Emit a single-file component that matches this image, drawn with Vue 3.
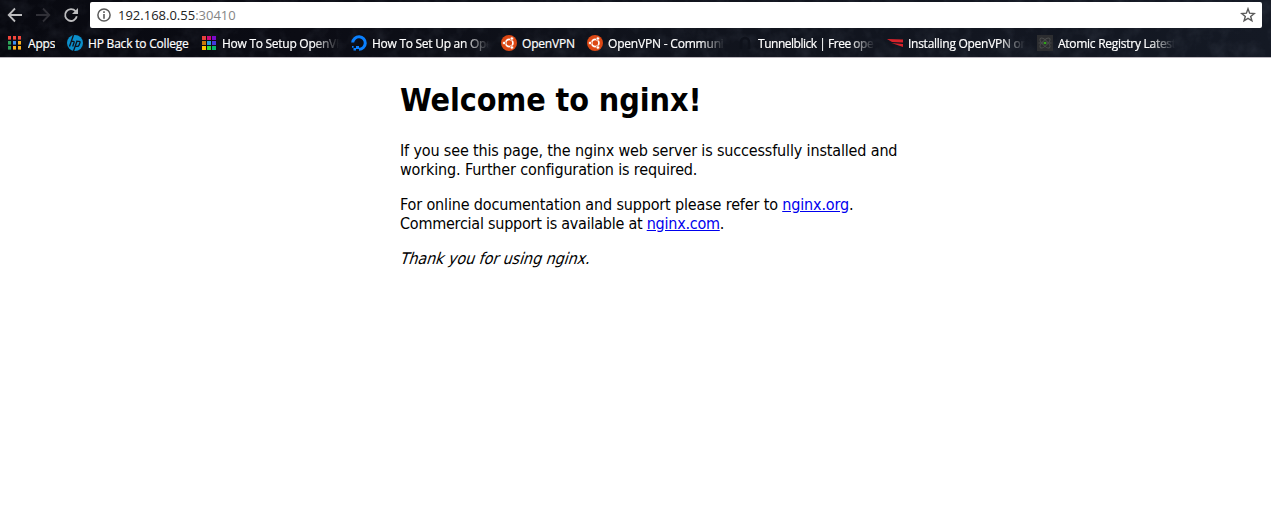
<script setup>
const bookmarks = [
  { icon: 'apps', title: 'Apps', cls: 'b-apps' },
  { icon: 'hp', title: 'HP Back to College', cls: 'b-hp' },
  { icon: 'grid', title: 'How To Setup OpenVP', cls: 'b-full snug' },
  { icon: 'ocean', title: 'How To Set Up an Ope', cls: 'b-full snug' },
  { icon: 'ubuntu', title: 'OpenVPN', cls: 'b-vpn' },
  { icon: 'ubuntu', title: 'OpenVPN - Communi', cls: 'b-full' },
  { icon: 'tunnel', title: 'Tunnelblick | Free ope', cls: 'b-full tight' },
  { icon: 'stripes', title: 'Installing OpenVPN on', cls: 'b-full snug' },
  { icon: 'atomic', title: 'Atomic Registry Latest', cls: 'b-full snug' },
]
const appColors = ['#f2463c', '#f2463c', '#f2463c', '#2da65a', '#3d8ff0', '#fab11e', '#2da65a', '#fab11e', '#fab11e']
const gridColors = ['#e5433c', '#cf0a78', '#7a0acb', '#c97a0a', '#2a9bd8', '#4438e0', '#ffc400', '#35dc38', '#08b86c']
</script>

<template>
  <div class="window">
    <header class="chrome">
      <svg class="texture" width="1271" height="57" aria-hidden="true">
        <filter id="grain" x="0" y="0" width="100%" height="100%">
          <feTurbulence type="fractalNoise" baseFrequency="0.07" numOctaves="4" seed="8" />
          <feColorMatrix values="0 0 0 0 0.25  0 0 0 0 0.29  0 0 0 0 0.37  1.6 0 0 0 -0.65" />
        </filter>
        <rect width="1271" height="57" filter="url(#grain)" />
      </svg>
      <div class="toolbar">
        <svg class="nav" width="90" height="30" viewBox="0 0 90 30" fill="none" stroke-width="1.8">
          <path d="M22 15H9M15 8.500L8.700 15L15 21.500" stroke="#bdbdbf" />
          <path d="M36 15H49M43 8.500L49.300 15L43 21.500" stroke="#303037" />
          <path d="M75.600 11.300A5.900 5.900 0 1 0 76.800 16.300" stroke="#bdbdbf" />
          <path d="M78 8V14H72Z" fill="#bdbdbf" />
        </svg>
        <div class="address">
          <svg class="info" width="14" height="14" viewBox="0 0 14 14">
            <circle cx="7" cy="7" r="6.100" fill="none" stroke="#5a5a5a" stroke-width="1.500" />
            <path d="M6.200 3.300h1.600v1.600H6.200zM6.200 6h1.600v4.700H6.200z" fill="#5a5a5a" />
          </svg>
          <span class="url">192.168.0.55<span class="port">:30410</span></span>
          <svg class="star" width="16" height="16" viewBox="0 0 16 16">
            <path d="M8 1.800L9.600 6.200L14.200 6.500L10.700 9.400L11.900 13.800L8 11.300L4.100 13.800L5.300 9.400L1.800 6.500L6.400 6.200Z" fill="none" stroke="#5a5a5a" stroke-width="1.400" />
          </svg>
        </div>
      </div>
      <nav class="bookmarks">
        <div v-for="(b, i) in bookmarks" :key="i" class="bookmark" :class="b.cls">
          <svg width="16" height="16" viewBox="0 0 16 16">
            <template v-if="b.icon === 'apps'">
              <rect v-for="(c, n) in appColors" :key="n" :x="1 + (n % 3) * 5" :y="1 + Math.floor(n / 3) * 5" width="3" height="3.600" :fill="c" />
            </template>
            <template v-else-if="b.icon === 'grid'">
              <rect v-for="(c, n) in gridColors" :key="n" :x="1 + (n % 3) * 5" :y="1 + Math.floor(n / 3) * 5" width="4" height="4" :fill="c" />
            </template>
            <template v-else-if="b.icon === 'hp'">
              <circle cx="8" cy="8" r="8" fill="#0b8fcb" />
              <path d="M6.500 0L2.500 11.500M3.700 6.300H6.200Q7.500 6.300 7 7.700L5.700 11.500M10.200 5.500L6.500 16M9.800 6.300H12Q13.400 6.300 12.900 7.700L12 10.200Q11.600 11.300 10.300 11.300H8.500" fill="none" stroke="#10131c" stroke-width="1.300" />
            </template>
            <template v-else-if="b.icon === 'ocean'">
              <path d="M1.700 7.500A6.300 6.300 0 1 1 8 14.300" fill="none" stroke="#0a80ff" stroke-width="3" />
              <path d="M5 11h3v3H5zM2.500 13h2.500v2.500H2.500zM1 11h1.600v1.800H1z" fill="#0a80ff" />
            </template>
            <template v-else-if="b.icon === 'ubuntu'">
              <circle cx="8" cy="8" r="8" fill="#dd4814" />
              <circle cx="8.300" cy="8" r="3.600" fill="none" stroke="#fff" stroke-width="1.700" />
              <g fill="#fff" stroke="#dd4814" stroke-width=".7">
                <circle cx="3.100" cy="8" r="1.700" />
                <circle cx="10.900" cy="3.500" r="1.700" />
                <circle cx="10.900" cy="12.500" r="1.700" />
              </g>
            </template>
            <template v-else-if="b.icon === 'tunnel'">
              <path d="M4 14V7a4 4 0 0 1 8 0v7" fill="none" stroke="#0e111a" stroke-width="2.500" />
            </template>
            <template v-else-if="b.icon === 'stripes'">
              <path d="M0 4L16 4.500V7.500L5 7Z" fill="#d9232b" />
              <path d="M4.500 8L16 9V12Z" fill="#d9232b" />
            </template>
            <template v-else>
              <rect width="16" height="16" fill="#2c2d30" />
              <g fill="none" stroke="#4b4d4d" stroke-width="1">
                <ellipse cx="8" cy="8" rx="6.500" ry="2.500" transform="rotate(45 8 8)" />
                <ellipse cx="8" cy="8" rx="6.500" ry="2.500" transform="rotate(-45 8 8)" />
                <path d="M1.500 8h13" />
              </g>
              <circle cx="8" cy="8" r="1.300" fill="#31a719" />
            </template>
          </svg>
          <span class="label">{{ b.title }}</span>
        </div>
      </nav>
    </header>
    <main class="page">
      <h1>Welcome to nginx!</h1>
      <p>
        If you see this page, the nginx web server is successfully installed and<br />
        working. Further configuration is required.
      </p>
      <p>
        For online documentation and support please refer to <a href="#">nginx.org</a>.<br />
        <span class="commercial">Commercial support is available at <a href="#">nginx.com</a>.</span>
      </p>
      <p><em>Thank you for using nginx.</em></p>
    </main>
  </div>
</template>

<style>
body { background: #fff; }
</style>
<style scoped>
.window { width: 1271px; height: 508px; overflow: hidden; background: #fff; }
.chrome {
  position: relative;
  box-sizing: border-box;
  height: 58px;
  border-bottom: 1px solid #b9b4bb;
  background: linear-gradient(90deg, #080910 0, #0b0c14 300px, #10131c 650px, #141924 1271px);
  font-family: "Open Sans", "Noto Sans", sans-serif;
}
.texture { position: absolute; inset: 0; opacity: .14; }
.toolbar { position: relative; display: flex; align-items: flex-start; height: 30px; }
.nav { flex: none; }
.address {
  display: flex;
  align-items: center;
  box-sizing: border-box;
  width: 1172px;
  height: 26px;
  margin-top: 2px;
  padding: 0 6px 0 7px;
  background: #fff;
  border-radius: 2px;
}
.url { margin-left: 7px; font-size: 13px; line-height: 26px; color: #222; white-space: nowrap; }
.port { color: #858585; }
.star { margin-left: auto; }
.bookmarks { position: relative; display: flex; gap: 12px; height: 26px; padding-left: 7px; align-items: center; }
.bookmark { display: flex; align-items: center; gap: 5px; flex: none; box-sizing: border-box; }
.bookmark svg { flex: none; }
.label { flex: 1; min-width: 0; overflow: hidden; white-space: nowrap; font-size: 12px; line-height: 18px; padding-top: 1px; color: #fff; letter-spacing: -.2px; -webkit-text-stroke: .2px #fff; }
.b-apps { width: 48px; }
.b-hp { width: 122px; }
.b-vpn { width: 74px; }
.b-full { width: 138px; }
.b-full .label { mask-image: linear-gradient(90deg, #000 92px, transparent 117px); }
.snug .label { letter-spacing: -.27px; }
.tight .label { letter-spacing: -.48px; }
.page { width: 504px; margin: 0 0 0 400px; color: #000; font: 16px/19px "DejaVu Sans Condensed", "DejaVu Sans", sans-serif; letter-spacing: -.15px; white-space: nowrap; }
h1 { margin: 23px 0 21px; font-size: 32px; line-height: 39px; font-weight: 700; letter-spacing: -.1px; }
p { margin: 0 0 16px; }
a { color: #00e; text-decoration: underline; }
.commercial { letter-spacing: -.24px; }
em { display: inline-block; margin-left: 1px; font-style: normal; letter-spacing: -.08px; transform: skewX(-18deg); }
</style>
